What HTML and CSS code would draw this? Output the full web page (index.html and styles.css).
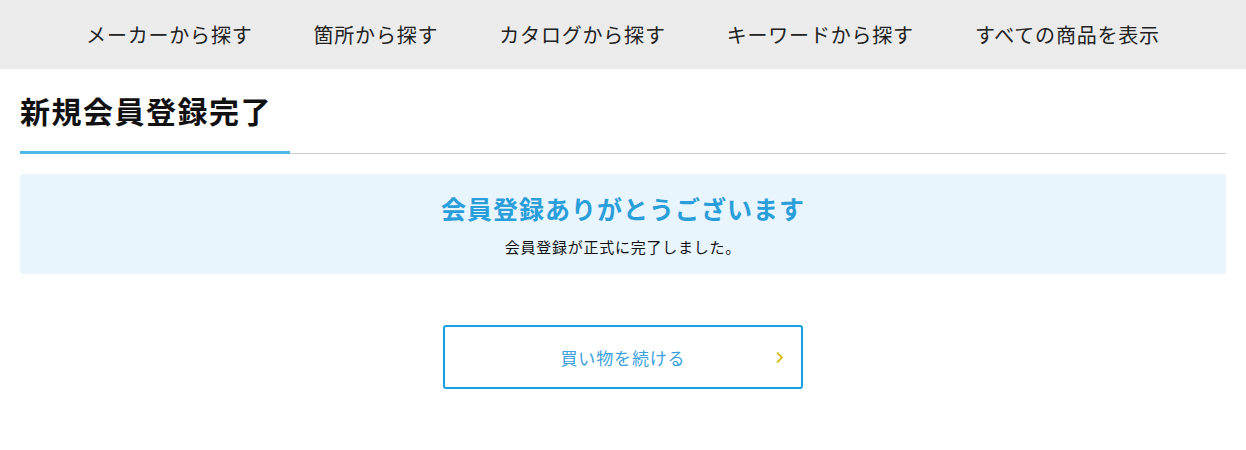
FILE: index.html
```html
<!DOCTYPE html>
<html lang="ja">
<head>
	<meta charset="UTF-8">
	<title>新規会員登録完了</title>
	<link rel="stylesheet" href="styles.css">
</head>
<body>
	<nav class="gnav">
		<a href="#">メーカーから探す</a>
		<a href="#">箇所から探す</a>
		<a href="#">カタログから探す</a>
		<a href="#">キーワードから探す</a>
		<a href="#">すべての商品を表示</a>
	</nav>

	<main class="content">
		<div class="page-title">
			<h1>新規会員登録完了</h1>
		</div>

		<div class="complete-box">
			<h2>会員登録ありがとうございます</h2>
			<p>会員登録が正式に完了しました。</p>
		</div>

		<div class="btn-area">
			<a href="#" class="btn-next">
				<span>買い物を続ける</span>
				<svg class="arrow" width="9" height="13" viewBox="0 0 9 13"><polyline points="2,1.5 7,6.5 2,11.5" fill="none" stroke="#d3c01e" stroke-width="1.8"/></svg>
			</a>
		</div>
	</main>
</body>
</html>
```

FILE: styles.css
```css
* {
	margin: 0;
	padding: 0;
	box-sizing: border-box;
}
body {
	font-family: "Noto Sans CJK JP", "Noto Sans", sans-serif;
	color: #111;
	background: #fff;
}
a {
	text-decoration: none;
}

/* global nav */
.gnav {
	height: 69px;
	background: #ebebeb;
	display: flex;
	justify-content: center;
	align-items: center;
	gap: 61px;
}
.gnav a {
	color: #222;
	font-size: 20px;
	letter-spacing: 0.04em;
	line-height: 30px;
}

.content {
	padding: 0 20px;
}

/* page title */
.page-title {
	position: relative;
	padding: 19px 0 20px;
	border-bottom: 1px solid #cccccc;
}
.page-title::after {
	content: "";
	position: absolute;
	left: 0;
	bottom: -1px;
	width: 270px;
	height: 3px;
	background: #4db9e9;
}
.page-title h1 {
	font-size: 30px;
	font-weight: bold;
	line-height: 45px;
	letter-spacing: 0.05em;
}

/* message */
.complete-box {
	margin-top: 20px;
	height: 100px;
	padding-top: 16px;
	background: #e8f5fd;
	border-radius: 3px;
	text-align: center;
}
.complete-box h2 {
	color: #2a9edb;
	font-size: 25px;
	font-weight: bold;
	line-height: 36px;
	letter-spacing: 0.04em;
}
.complete-box p {
	margin-top: 9px;
	font-size: 15px;
	line-height: 24px;
	letter-spacing: 0.05em;
}

/* button */
.btn-area {
	display: flex;
	justify-content: center;
	margin-top: 51px;
}
.btn-next {
	position: relative;
	display: flex;
	justify-content: center;
	align-items: center;
	width: 360px;
	height: 64px;
	border: 2px solid #17a0e3;
	border-radius: 3px;
	color: #3a9fdc;
	font-size: 17px;
	letter-spacing: 0.05em;
}
.btn-next .arrow {
	position: absolute;
	right: 17px;
	top: 50%;
	margin-top: -6px;
}
```
